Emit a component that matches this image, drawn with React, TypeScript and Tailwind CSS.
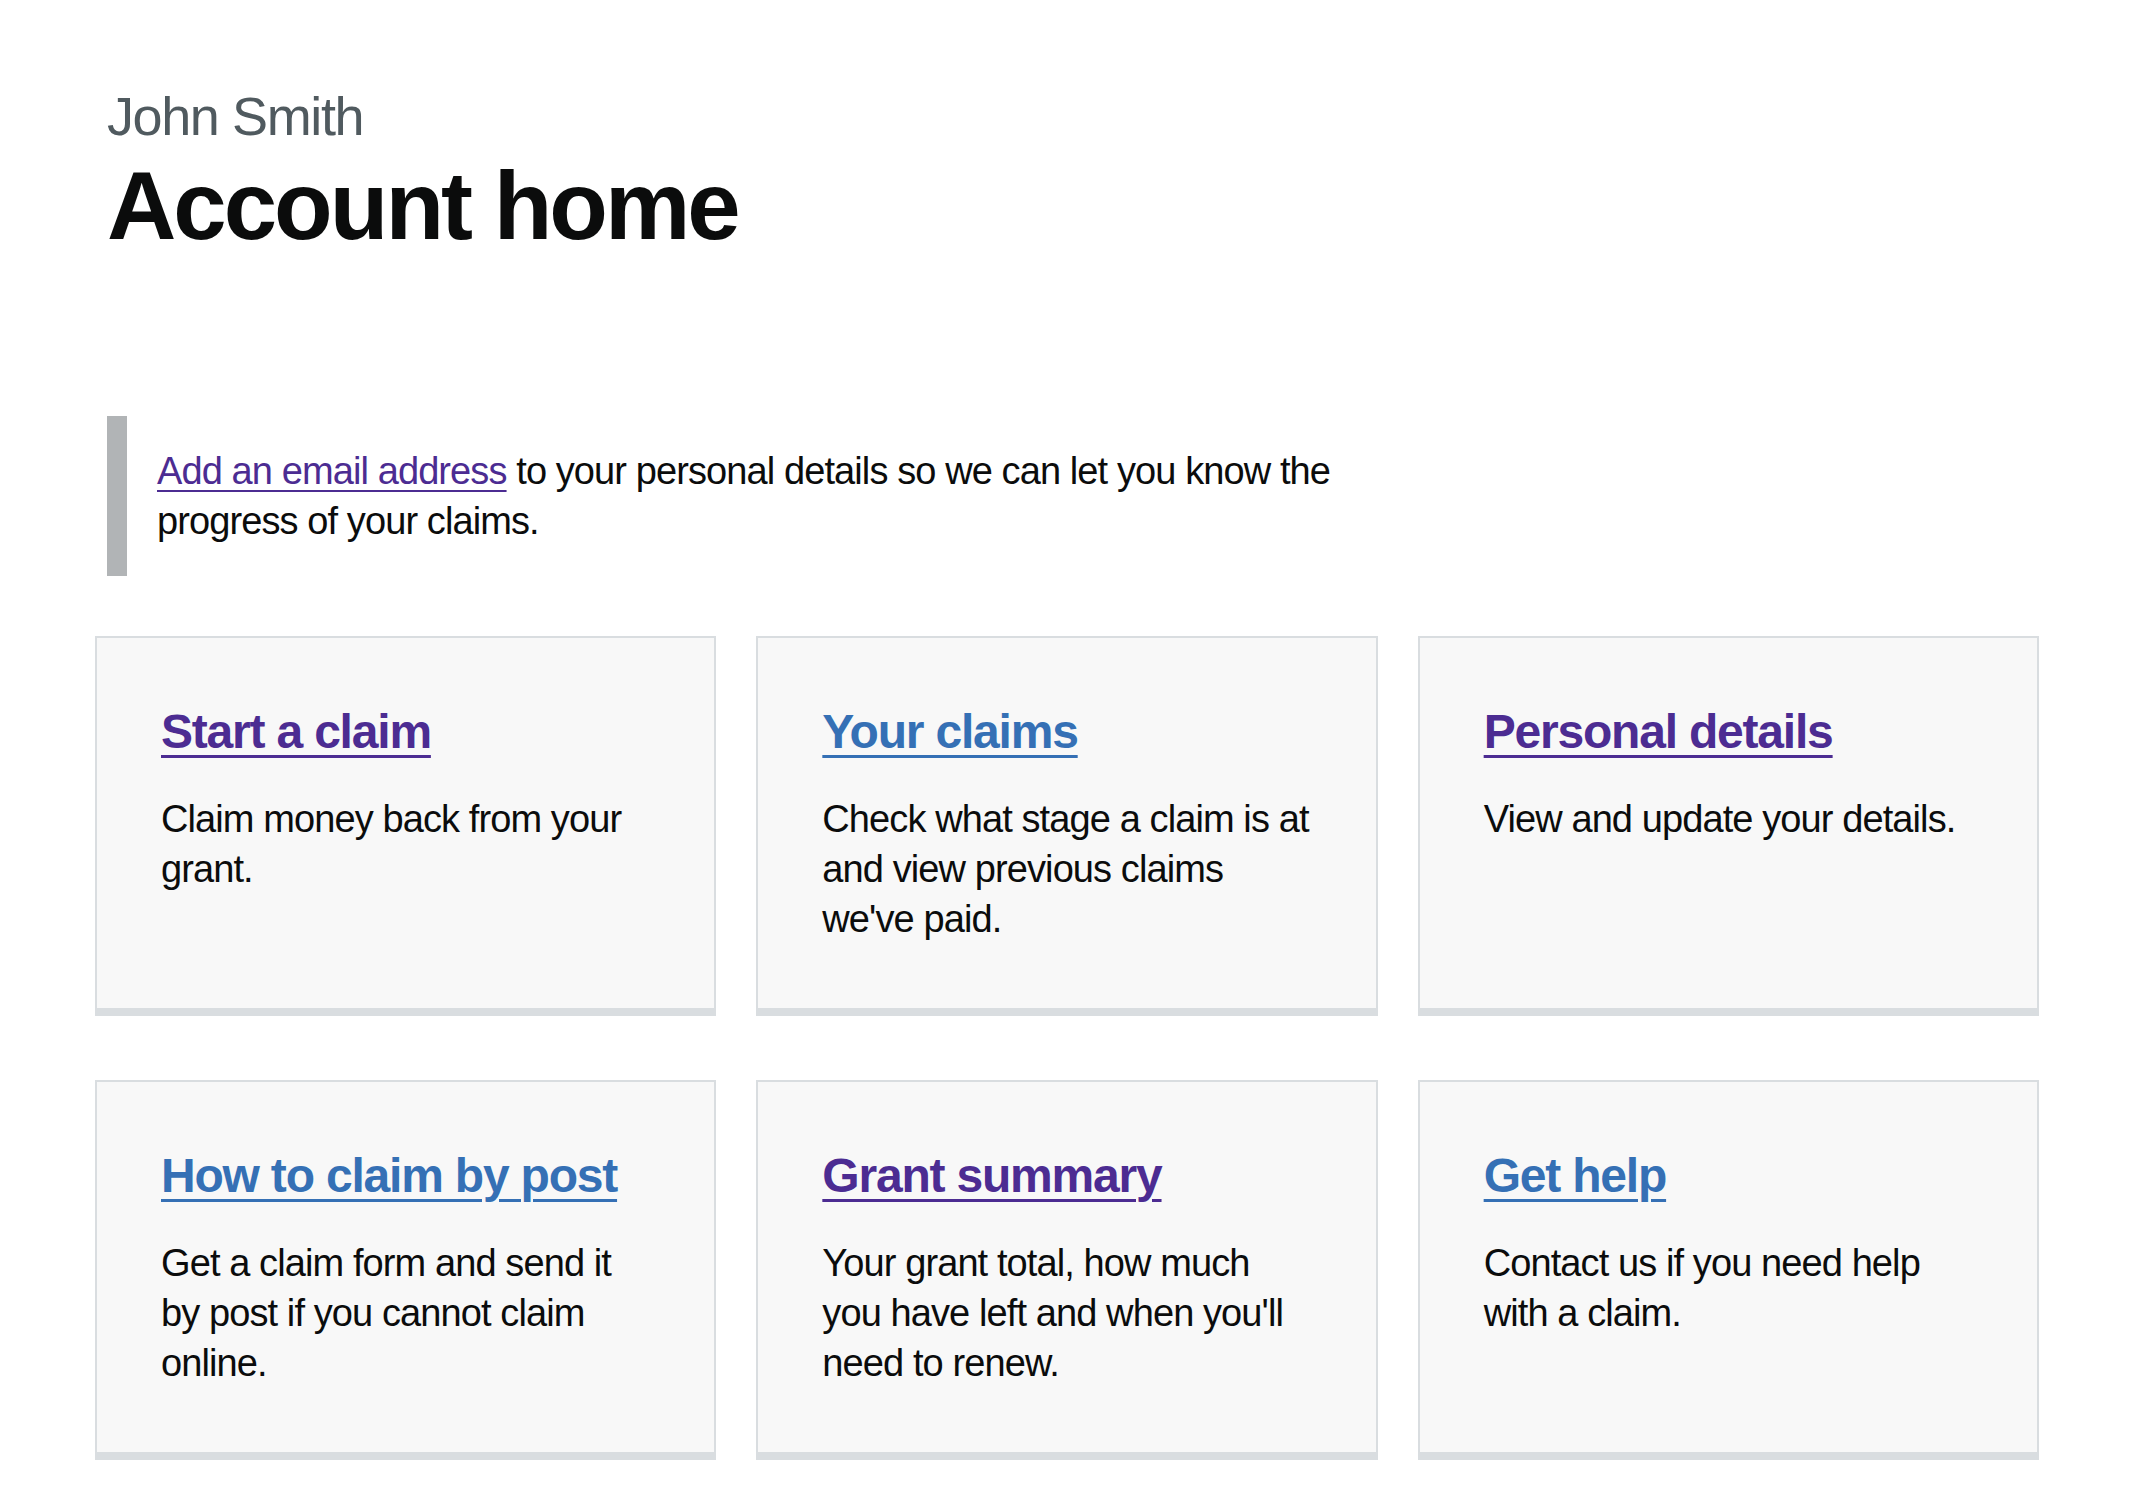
import React from "react";

type Card = { title: string; href: string; visited: boolean; body: string };

const cards: Card[] = [
  { title: "Start a claim", href: "#start", visited: true, body: "Claim money back from your grant." },
  { title: "Your claims", href: "#claims", visited: false, body: "Check what stage a claim is at and view previous claims we've paid." },
  { title: "Personal details", href: "#details", visited: true, body: "View and update your details." },
  { title: "How to claim by post", href: "#post", visited: false, body: "Get a claim form and send it by post if you cannot claim online." },
  { title: "Grant summary", href: "#summary", visited: true, body: "Your grant total, how much you have left and when you'll need to renew." },
  { title: "Get help", href: "#help", visited: false, body: "Contact us if you need help with a claim." },
];

const bodyFont = { fontFamily: "'Liberation Sans', Arial, sans-serif" };

export default function App() {
  return (
    <div className="min-h-screen bg-white text-[#0b0c0c] pl-[95px]" style={{ fontFamily: "'Liberation Sans', Arial, sans-serif" }}>
      <div className="ml-[12px] pt-[86px]">
        <span className="block text-[54px] leading-[60px] text-[#505a5f] tracking-[-1.4px]">John Smith</span>
        <h1 className="mt-[10px] text-[96px] leading-[100px] font-bold tracking-[-3px]">Account home</h1>
      </div>

      <div className="ml-[12px] mt-[160px] border-l-[20px] border-[#b1b4b6] p-[30px] box-content w-[1280px]" style={bodyFont}>
        <p className="text-[38px] leading-[50px] tracking-[-0.9px]">
          <a href="#email" className="text-[#4c2c92] underline decoration-2 underline-offset-[6px]">Add an email address</a>
          <span> to your personal details so we can let you know the progress of your claims.</span>
        </p>
      </div>

      <div className="mt-[60px] grid grid-cols-3 gap-x-[40px] gap-y-[64px] w-[1944px]">
        {cards.map((c) => (
          <div key={c.title} className="bg-[#f8f8f8] border-2 border-b-[8px] border-[#d9dde0] px-[64px] pt-[64px] pb-[64px]">
            <h2 className="text-[48px] leading-[60px] font-bold tracking-[-1.2px]">
              <a href={c.href} className={(c.visited ? "text-[#4c2c92]" : "text-[#3570b5]") + " underline decoration-[3px] underline-offset-[7px]"}>{c.title}</a>
            </h2>
            <p className="mt-[32px] text-[38px] leading-[50px] tracking-[-0.9px]" style={bodyFont}>{c.body}</p>
          </div>
        ))}
      </div>
    </div>
  );
}
